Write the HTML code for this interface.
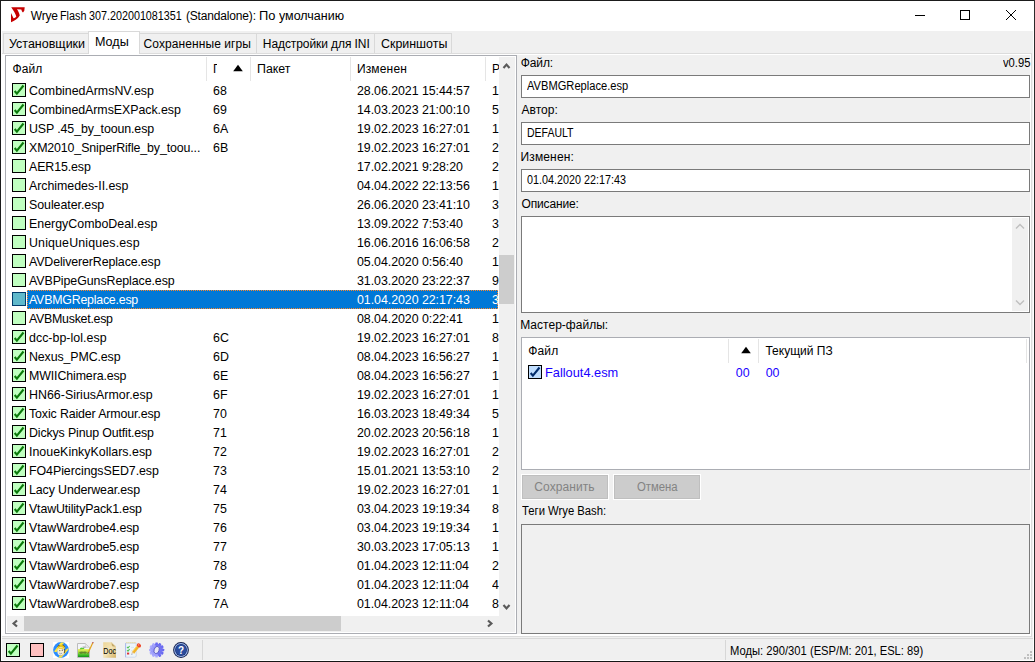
<!DOCTYPE html>
<html lang="ru"><head><meta charset="utf-8"><title>Wrye Flash</title>
<style>
*{box-sizing:border-box;margin:0;padding:0}
html,body{width:1035px;height:662px;overflow:hidden;background:#f0f0f0}
body{position:relative;font-family:"Liberation Sans",sans-serif;font-size:12px;color:#000;line-height:14px}
.a{position:absolute}
.t{position:absolute;white-space:pre;line-height:14px;height:14px;transform-origin:0 0}
#bt{left:0;top:0;width:1035px;height:1px;background:#1b1b1b}
#bl{left:0;top:0;width:1px;height:662px;background:#1b1b1b}
#br{left:1034px;top:0;width:1px;height:662px;background:#2b2b2b}
#bb{left:0;top:661px;width:1035px;height:1px;background:#161616}
#title{left:1px;top:1px;width:1033px;height:30px;background:#fff}
.tab{position:absolute;top:33px;height:21px;background:#f0f0f0;border:1px solid #d9d9d9;border-bottom:none}
.tab.sel{top:31px;height:23px;background:#fff}
#pageline{left:2px;top:53px;width:1030px;height:1px;background:#dcdcdc}
#page{left:1px;top:54px;width:1030px;height:582px;background:#fff}
#rp{left:517px;top:55px;width:513px;height:579px;background:#f0f0f0}
#list{left:5px;top:55px;width:512px;height:579px;border:1px solid #abadb3;background:#fff;overflow:hidden}
.hd{position:absolute;top:57px;height:24px;border-right:1px solid #e5e5e5}
.row{position:absolute;left:7px;width:491px;height:19px;font-size:12.4px;line-height:19px;white-space:pre}
.row span{position:absolute;top:1px;height:19px}
.row .c1{left:22px}
.row .c2{left:206px}
.row .c4{left:350px;letter-spacing:-0.05px}
.row .c5{left:485px;width:7px;overflow:hidden}
.row.sel::before{content:"";position:absolute;left:20px;top:0;right:0;height:19px;box-sizing:border-box;background:#0078d7;border:1px dotted #ff8728}
.row.sel span{color:#fff}
.cb{position:absolute;left:5px;top:2px;width:14px;height:14px;border:1px solid #000;background:#c0ffc0}
.cb svg{position:absolute;left:-1px;top:-1px;width:14px;height:14px}
.cb.selcb{background:#60b9cb;border-color:#003a6b}
.inp{position:absolute;left:521px;width:509px;height:23px;background:#fff;border:1px solid #7a7a7a}
.btn{position:absolute;top:475px;width:86px;height:24px;background:#ccc;border:1px solid #bfbfbf;box-shadow:0 0 0 1px #fff}
</style></head><body>
<div class="a" id="title"></div>
<svg class="a" style="left:10px;top:6px" width="16" height="18" viewBox="0 0 16 18"><path d="M1.2 1.2 L14.7 1.2 L14.3 4.8 L13 6.4 L12 5.6 L11.3 3.4 L7 3.3 C8.4 5.4 9.5 7.6 9.7 9.5 C8 12.6 4.6 14.8 1 16.2 L1 7.1 L3.5 12.2 C5 11.8 6 11.2 6.3 10.4 C5.4 7.6 3.6 4.4 1.2 1.2 Z" fill="#c60000"/></svg>
<svg class="a" style="left:905px;top:5px" width="125" height="22" viewBox="0 0 125 22" fill="none" stroke="#000" stroke-width="1"><path d="M10 10.5 H20"/><rect x="55.5" y="5.5" width="9" height="9"/><path d="M101 5 L111 15 M111 5 L101 15"/></svg>

<div class="tab" style="left:3px;width:86px"></div>
<div class="tab" style="left:139px;width:118px"></div>
<div class="tab" style="left:256px;width:119px"></div>
<div class="tab" style="left:374px;width:78px"></div>
<div class="a" id="pageline"></div>
<div class="a" id="page"></div><div class="a" id="rp"></div><div class="a" style="left:1031px;top:53px;width:1px;height:584px;background:#dcdcdc"></div>
<div class="tab sel" style="left:88px;width:52px"></div>

<div class="a" id="list"></div>
<div class="hd" style="left:7px;width:200px"></div>
<div class="hd" style="left:207px;width:44px"></div>
<div class="hd" style="left:251px;width:100px"></div>
<div class="hd" style="left:351px;width:135px"></div>
<div class="t" style="left:213px;top:62px;width:4px;overflow:hidden">Г</div>
<svg class="a" style="left:232.5px;top:64px" width="10" height="8" viewBox="0 0 10 8"><path d="M5 0.8 L9.8 7.2 H0.2 Z" fill="#000"/></svg>
<div class="t" style="left:492px;top:62px;width:7px;overflow:hidden">Р</div>
<div class="row" style="top:81px"><i class="cb on"><svg viewBox="0 0 14 14" width="14" height="14"><path d="M2.7 8 L4.9 10.7 L11.5 2.5" fill="none" stroke="#0a7a0a" stroke-width="2.1"/></svg></i><span class="c1">CombinedArmsNV.esp</span><span class="c2">68</span><span class="c4">28.06.2021 15:44:57</span><span class="c5">1</span></div>
<div class="row" style="top:100px"><i class="cb on"><svg viewBox="0 0 14 14" width="14" height="14"><path d="M2.7 8 L4.9 10.7 L11.5 2.5" fill="none" stroke="#0a7a0a" stroke-width="2.1"/></svg></i><span class="c1" style="letter-spacing:-0.05px">CombinedArmsEXPack.esp</span><span class="c2">69</span><span class="c4">14.03.2023 21:00:10</span><span class="c5">5</span></div>
<div class="row" style="top:119px"><i class="cb on"><svg viewBox="0 0 14 14" width="14" height="14"><path d="M2.7 8 L4.9 10.7 L11.5 2.5" fill="none" stroke="#0a7a0a" stroke-width="2.1"/></svg></i><span class="c1" style="letter-spacing:-0.11px">USP .45_by_tooun.esp</span><span class="c2">6A</span><span class="c4">19.02.2023 16:27:01</span><span class="c5">1</span></div>
<div class="row" style="top:138px"><i class="cb on"><svg viewBox="0 0 14 14" width="14" height="14"><path d="M2.7 8 L4.9 10.7 L11.5 2.5" fill="none" stroke="#0a7a0a" stroke-width="2.1"/></svg></i><span class="c1" style="letter-spacing:-0.13px">XM2010_SniperRifle_by_toou...</span><span class="c2">6B</span><span class="c4">19.02.2023 16:27:01</span><span class="c5">2</span></div>
<div class="row" style="top:157px"><i class="cb"></i><span class="c1" style="letter-spacing:-0.11px">AER15.esp</span><span class="c4">17.02.2021 9:28:20</span><span class="c5">2</span></div>
<div class="row" style="top:176px"><i class="cb"></i><span class="c1" style="letter-spacing:-0.03px">Archimedes-II.esp</span><span class="c4">04.04.2022 22:13:56</span><span class="c5">1</span></div>
<div class="row" style="top:195px"><i class="cb"></i><span class="c1" style="letter-spacing:-0.05px">Souleater.esp</span><span class="c4">26.06.2020 23:41:10</span><span class="c5">3</span></div>
<div class="row" style="top:214px"><i class="cb"></i><span class="c1" style="letter-spacing:0.01px">EnergyComboDeal.esp</span><span class="c4">13.09.2022 7:53:40</span><span class="c5">3</span></div>
<div class="row" style="top:233px"><i class="cb"></i><span class="c1" style="letter-spacing:0.15px">UniqueUniques.esp</span><span class="c4">16.06.2016 16:06:58</span><span class="c5">2</span></div>
<div class="row" style="top:252px"><i class="cb"></i><span class="c1" style="letter-spacing:-0.12px">AVDelivererReplace.esp</span><span class="c4">05.04.2020 0:56:40</span><span class="c5">1</span></div>
<div class="row" style="top:271px"><i class="cb"></i><span class="c1" style="letter-spacing:-0.07px">AVBPipeGunsReplace.esp</span><span class="c4">31.03.2020 23:22:37</span><span class="c5">9</span></div>
<div class="row sel" style="top:290px"><i class="cb selcb"></i><span class="c1" style="letter-spacing:-0.23px">AVBMGReplace.esp</span><span class="c4">01.04.2020 22:17:43</span><span class="c5">3</span></div>
<div class="row" style="top:309px"><i class="cb"></i><span class="c1" style="letter-spacing:-0.27px">AVBMusket.esp</span><span class="c4">08.04.2020 0:22:41</span><span class="c5">1</span></div>
<div class="row" style="top:328px"><i class="cb on"><svg viewBox="0 0 14 14" width="14" height="14"><path d="M2.7 8 L4.9 10.7 L11.5 2.5" fill="none" stroke="#0a7a0a" stroke-width="2.1"/></svg></i><span class="c1" style="letter-spacing:0.03px">dcc-bp-lol.esp</span><span class="c2">6C</span><span class="c4">19.02.2023 16:27:01</span><span class="c5">8</span></div>
<div class="row" style="top:347px"><i class="cb on"><svg viewBox="0 0 14 14" width="14" height="14"><path d="M2.7 8 L4.9 10.7 L11.5 2.5" fill="none" stroke="#0a7a0a" stroke-width="2.1"/></svg></i><span class="c1" style="letter-spacing:-0.12px">Nexus_PMC.esp</span><span class="c2">6D</span><span class="c4">08.04.2023 16:56:27</span><span class="c5">1</span></div>
<div class="row" style="top:366px"><i class="cb on"><svg viewBox="0 0 14 14" width="14" height="14"><path d="M2.7 8 L4.9 10.7 L11.5 2.5" fill="none" stroke="#0a7a0a" stroke-width="2.1"/></svg></i><span class="c1" style="letter-spacing:-0.12px">MWIIChimera.esp</span><span class="c2">6E</span><span class="c4">08.04.2023 16:56:27</span><span class="c5">1</span></div>
<div class="row" style="top:385px"><i class="cb on"><svg viewBox="0 0 14 14" width="14" height="14"><path d="M2.7 8 L4.9 10.7 L11.5 2.5" fill="none" stroke="#0a7a0a" stroke-width="2.1"/></svg></i><span class="c1" style="letter-spacing:0.02px">HN66-SiriusArmor.esp</span><span class="c2">6F</span><span class="c4">19.02.2023 16:27:01</span><span class="c5">1</span></div>
<div class="row" style="top:404px"><i class="cb on"><svg viewBox="0 0 14 14" width="14" height="14"><path d="M2.7 8 L4.9 10.7 L11.5 2.5" fill="none" stroke="#0a7a0a" stroke-width="2.1"/></svg></i><span class="c1" style="letter-spacing:-0.13px">Toxic Raider Armour.esp</span><span class="c2">70</span><span class="c4">16.03.2023 18:49:34</span><span class="c5">5</span></div>
<div class="row" style="top:423px"><i class="cb on"><svg viewBox="0 0 14 14" width="14" height="14"><path d="M2.7 8 L4.9 10.7 L11.5 2.5" fill="none" stroke="#0a7a0a" stroke-width="2.1"/></svg></i><span class="c1" style="letter-spacing:-0.14px">Dickys Pinup Outfit.esp</span><span class="c2">71</span><span class="c4">20.02.2023 20:56:18</span><span class="c5">1</span></div>
<div class="row" style="top:442px"><i class="cb on"><svg viewBox="0 0 14 14" width="14" height="14"><path d="M2.7 8 L4.9 10.7 L11.5 2.5" fill="none" stroke="#0a7a0a" stroke-width="2.1"/></svg></i><span class="c1" style="letter-spacing:0.02px">InoueKinkyKollars.esp</span><span class="c2">72</span><span class="c4">19.02.2023 16:27:01</span><span class="c5">2</span></div>
<div class="row" style="top:461px"><i class="cb on"><svg viewBox="0 0 14 14" width="14" height="14"><path d="M2.7 8 L4.9 10.7 L11.5 2.5" fill="none" stroke="#0a7a0a" stroke-width="2.1"/></svg></i><span class="c1" style="letter-spacing:-0.05px">FO4PiercingsSED7.esp</span><span class="c2">73</span><span class="c4">15.01.2021 13:53:10</span><span class="c5">2</span></div>
<div class="row" style="top:480px"><i class="cb on"><svg viewBox="0 0 14 14" width="14" height="14"><path d="M2.7 8 L4.9 10.7 L11.5 2.5" fill="none" stroke="#0a7a0a" stroke-width="2.1"/></svg></i><span class="c1" style="letter-spacing:-0.11px">Lacy Underwear.esp</span><span class="c2">74</span><span class="c4">19.02.2023 16:27:01</span><span class="c5">1</span></div>
<div class="row" style="top:499px"><i class="cb on"><svg viewBox="0 0 14 14" width="14" height="14"><path d="M2.7 8 L4.9 10.7 L11.5 2.5" fill="none" stroke="#0a7a0a" stroke-width="2.1"/></svg></i><span class="c1" style="letter-spacing:-0.15px">VtawUtilityPack1.esp</span><span class="c2">75</span><span class="c4">03.04.2023 19:19:34</span><span class="c5">8</span></div>
<div class="row" style="top:518px"><i class="cb on"><svg viewBox="0 0 14 14" width="14" height="14"><path d="M2.7 8 L4.9 10.7 L11.5 2.5" fill="none" stroke="#0a7a0a" stroke-width="2.1"/></svg></i><span class="c1" style="letter-spacing:-0.10px">VtawWardrobe4.esp</span><span class="c2">76</span><span class="c4">03.04.2023 19:19:34</span><span class="c5">1</span></div>
<div class="row" style="top:537px"><i class="cb on"><svg viewBox="0 0 14 14" width="14" height="14"><path d="M2.7 8 L4.9 10.7 L11.5 2.5" fill="none" stroke="#0a7a0a" stroke-width="2.1"/></svg></i><span class="c1" style="letter-spacing:-0.10px">VtawWardrobe5.esp</span><span class="c2">77</span><span class="c4">30.03.2023 17:05:13</span><span class="c5">1</span></div>
<div class="row" style="top:556px"><i class="cb on"><svg viewBox="0 0 14 14" width="14" height="14"><path d="M2.7 8 L4.9 10.7 L11.5 2.5" fill="none" stroke="#0a7a0a" stroke-width="2.1"/></svg></i><span class="c1" style="letter-spacing:-0.10px">VtawWardrobe6.esp</span><span class="c2">78</span><span class="c4">01.04.2023 12:11:04</span><span class="c5">2</span></div>
<div class="row" style="top:575px"><i class="cb on"><svg viewBox="0 0 14 14" width="14" height="14"><path d="M2.7 8 L4.9 10.7 L11.5 2.5" fill="none" stroke="#0a7a0a" stroke-width="2.1"/></svg></i><span class="c1" style="letter-spacing:-0.10px">VtawWardrobe7.esp</span><span class="c2">79</span><span class="c4">01.04.2023 12:11:04</span><span class="c5">4</span></div>
<div class="row" style="top:594px"><i class="cb on"><svg viewBox="0 0 14 14" width="14" height="14"><path d="M2.7 8 L4.9 10.7 L11.5 2.5" fill="none" stroke="#0a7a0a" stroke-width="2.1"/></svg></i><span class="c1" style="letter-spacing:-0.10px">VtawWardrobe8.esp</span><span class="c2">7A</span><span class="c4">01.04.2023 12:11:04</span><span class="c5">8</span></div>
<!-- vertical scrollbar -->
<div class="a" style="left:499px;top:57px;width:16px;height:575px;background:#f0f0f0"></div>
<div class="a" style="left:499px;top:255px;width:15px;height:49px;background:#cdcdcd"></div>
<svg class="a" style="left:498px;top:57px" width="17" height="17" viewBox="0 0 17 17"><path d="M5.5 11 L8.5 7.6 L11.5 11" fill="none" stroke="#5a5a5a" stroke-width="2.2"/></svg>
<svg class="a" style="left:498px;top:598px" width="17" height="17" viewBox="0 0 17 17"><path d="M5.5 7 L8.5 10.4 L11.5 7" fill="none" stroke="#5a5a5a" stroke-width="2.2"/></svg>
<!-- horizontal scrollbar -->
<div class="a" style="left:7px;top:616px;width:508px;height:16px;background:#f0f0f0"></div>
<div class="a" style="left:24px;top:616px;width:317px;height:15px;background:#cdcdcd"></div>
<svg class="a" style="left:7px;top:615px" width="17" height="17" viewBox="0 0 17 17"><path d="M10 5.5 L6.6 8.5 L10 11.5" fill="none" stroke="#5a5a5a" stroke-width="2.2"/></svg>
<svg class="a" style="left:482px;top:615px" width="17" height="17" viewBox="0 0 17 17"><path d="M6 5.5 L9.4 8.5 L6 11.5" fill="none" stroke="#5a5a5a" stroke-width="2.2"/></svg>

<!-- right panel -->
<div class="inp" style="top:75px"></div>
<div class="inp" style="top:122px"></div>
<div class="inp" style="top:169px"></div>
<div class="inp" style="top:216px;height:97px"></div>
<div class="a" style="left:1012px;top:218px;width:16px;height:93px;background:#f0f0f0"></div>
<svg class="a" style="left:1012px;top:218px" width="16" height="17" viewBox="0 0 16 17"><path d="M4 10.5 L8 6.5 L12 10.5" fill="none" stroke="#bfbfbf" stroke-width="1.4"/></svg>
<svg class="a" style="left:1012px;top:294px" width="16" height="17" viewBox="0 0 16 17"><path d="M4 6.5 L8 10.5 L12 6.5" fill="none" stroke="#bfbfbf" stroke-width="1.4"/></svg>
<div class="inp" style="top:337px;height:133px;border-color:#abadb3"></div>
<div class="a" style="left:728px;top:339px;width:1px;height:24px;background:#e5e5e5"></div>
<div class="a" style="left:758px;top:339px;width:1px;height:24px;background:#e5e5e5"></div>
<div class="a" style="left:1026px;top:339px;width:1px;height:24px;background:#e5e5e5"></div>
<svg class="a" style="left:740.5px;top:346px" width="10" height="8" viewBox="0 0 10 8"><path d="M5 0.8 L9.8 7.2 H0.2 Z" fill="#000"/></svg>
<i class="cb" style="left:528px;top:365px;background:#c0deff"><svg viewBox="0 0 14 14" width="14" height="14"><path d="M2.7 8 L4.9 10.7 L11.5 2.5" fill="none" stroke="#002c6c" stroke-width="2.1"/></svg></i>
<div class="btn" style="left:522px"></div>
<div class="btn" style="left:614px"></div>
<div class="inp" style="top:524px;height:110px;background:#f0f0f0"></div>

<!-- status bar -->
<div class="a" style="left:2px;top:636px;width:1030px;height:1px;background:#dcdcdc"></div><div class="a" style="left:1px;top:638px;width:1033px;height:1px;background:#d8d8d8"></div>
<div class="a" style="left:202px;top:640px;width:1px;height:20px;background:#d7d7d7"></div>
<div class="a" style="left:725px;top:640px;width:1px;height:20px;background:#d7d7d7"></div>
<i class="cb" style="left:6px;top:643px"><svg viewBox="0 0 14 14" width="14" height="14"><path d="M2.7 8 L4.9 10.7 L11.5 2.5" fill="none" stroke="#0a7a0a" stroke-width="2.1"/></svg></i>
<i class="cb" style="left:30px;top:643px;background:#ffc0c0"></i>
<svg class="a" style="left:1024px;top:651px" width="8" height="8" viewBox="0 0 8 8" fill="#bfbfbf"><rect x="6" y="0" width="2" height="2"/><rect x="3" y="3" width="2" height="2"/><rect x="6" y="3" width="2" height="2"/><rect x="0" y="6" width="2" height="2"/><rect x="3" y="6" width="2" height="2"/><rect x="6" y="6" width="2" height="2"/></svg>
<!-- status bar icons -->
<svg class="a" style="left:53px;top:642px" width="16" height="16" viewBox="0 0 16 16"><rect width="16" height="16" fill="#fff"/><circle cx="8" cy="8" r="7.9" fill="#2a8cff"/><path d="M8 0.2 L11.2 0.8 L6.4 6.6 L3.4 10.2 L1 9.4 Z M15.3 6 L15.5 7.6 L8.4 15.8 L5.2 15.4 L10.4 9.4 Z" fill="#ffe640"/><path d="M4.5 6.4 Q4.4 3.6 6.6 3.2 Q8 1.8 9.6 2.8 Q12 3.2 11.9 6 L11.3 7.6 Q8.4 5 4.8 7.2 Z" fill="#e9c41c"/><path d="M4.7 4.6 L5.5 3.3 L6.8 3.9 M9.4 2.9 Q11 3 11.6 4.8" stroke="#4a3c10" stroke-width="0.7" fill="none"/><ellipse cx="7.9" cy="9.4" rx="3.5" ry="4.1" fill="#f8efd8"/><path d="M4.6 7.2 Q8 4.8 11.2 7.2 Q8 6.2 4.6 7.2 Z" fill="#e9c41c"/><path d="M11.2 7.2 Q12.7 8.6 11.1 11.2" stroke="#3e3220" stroke-width="0.9" fill="none"/><circle cx="6.8" cy="8.6" r="0.65" fill="#6a6058"/><circle cx="9.3" cy="8.2" r="0.65" fill="#5a5048"/><path d="M6.2 11.2 Q7.6 12.4 9 11.2" stroke="#88a0b4" stroke-width="0.9" fill="none"/><path d="M6 13.4 Q8 14.4 10 12.8" stroke="#bfae88" stroke-width="0.7" fill="none"/></svg>
<svg class="a" style="left:77px;top:642px" width="17" height="16" viewBox="0 0 17 16"><defs><linearGradient id="lg1" x1="0" y1="0" x2="0" y2="1"><stop offset="0" stop-color="#f4f06a"/><stop offset="0.35" stop-color="#b4de3c"/><stop offset="0.7" stop-color="#4cc02c"/><stop offset="1" stop-color="#109418"/></linearGradient></defs><path d="M0.5 1.5 H8.4 L12.5 5.4 V15.5 H0.5 Z" fill="#f3f5f8" stroke="#bcbcbc"/><path d="M8.4 1.5 V5.4 H12.5" fill="#e6e6e6" stroke="#c8c8c8" stroke-width="0.6"/><rect x="1" y="7" width="11" height="8" fill="url(#lg1)"/><path d="M2.6 7.4 Q3.6 4.6 5.4 6 Q6.6 4.8 7.4 7 Z" fill="#58cc34"/><path d="M5.6 4.4 H8.6 V6 H5.6 Z" fill="#b4b8bc"/><path d="M2 10.2 Q4.6 8.8 6.2 9.8 Q8.4 8.8 10 10.2 L8.4 11.8 Q6 10.8 3.8 12 Z" fill="#56742a" opacity="0.8"/><path d="M15.9 0.6 L11.3 10.4" stroke="#e2a21c" stroke-width="1.2"/><path d="M16.2 0 L15.6 1.3" stroke="#b4526a" stroke-width="1.2"/><path d="M11.4 10.2 L10.8 11.6" stroke="#6a5030" stroke-width="1"/></svg>
<svg class="a" style="left:103px;top:642px" width="14" height="16" viewBox="0 0 14 16"><defs><linearGradient id="lg2" x1="0" y1="0" x2="1" y2="1"><stop offset="0" stop-color="#ecd598"/><stop offset="0.5" stop-color="#f4e4b6"/><stop offset="1" stop-color="#d4b264"/></linearGradient></defs><path d="M0.2 0.3 H8.6 L13 4.4 V15.8 H0.2 Z" fill="url(#lg2)"/><path d="M8.6 0.3 L13 4.4 H9.8 Q8.4 4.2 8.6 0.3 Z" fill="#c4a868"/><path d="M8.8 0.5 L12.8 4.2" stroke="#f8f2e2" stroke-width="0.8"/><text x="0.2" y="12" font-family="Liberation Sans, sans-serif" font-size="9.4" textLength="12.8" lengthAdjust="spacingAndGlyphs" fill="#000">Doc</text></svg>
<svg class="a" style="left:125px;top:642px" width="17" height="16" viewBox="0 0 17 16"><path d="M0.6 1.2 H11.2 V14.4 L9.8 15.2 H0.6 Z" fill="#edf5fb" stroke="#c6d2e8" stroke-width="0.8"/><path d="M0.6 1.2 V15.2" stroke="#a9b9ea" stroke-width="1"/><path d="M1.4 0.7 H10.8" stroke="#e6d68c" stroke-width="1.2" stroke-dasharray="1 1"/><path d="M2 5 L3 6 L4.6 4 M2 8.2 L3 9.2 L4.6 7.2" stroke="#58c458" stroke-width="1.1" fill="none"/><rect x="2" y="10.6" width="2.2" height="1.9" fill="#de3434"/><path d="M6 5.4 H9 M6 8.6 H7.4" stroke="#d4e0ee" stroke-width="0.8"/><path d="M13 4.6 L8 10.8" stroke="#f2b42a" stroke-width="2.9"/><path d="M12 3.9 L7.2 9.9" stroke="#fbdc72" stroke-width="0.9"/><ellipse cx="13.9" cy="3.4" rx="2.3" ry="1.8" transform="rotate(40 13.9 3.4)" fill="#ee4424"/><circle cx="13.6" cy="2.9" r="0.8" fill="#ff8468"/><path d="M9 10 L6.4 12.6 L7 9.6 Z" fill="#e6c698"/><path d="M7 11.6 L6.3 12.7 L7.5 12.2 Z" fill="#46568e"/></svg>
<svg class="a" style="left:149px;top:642px" width="16" height="16" viewBox="0 0 16 16"><defs><linearGradient id="lg3" gradientUnits="userSpaceOnUse" x1="-3" y1="-7.5" x2="3" y2="7.5"><stop offset="0" stop-color="#6262ee"/><stop offset="0.55" stop-color="#8686f8"/><stop offset="1" stop-color="#b8b8ff"/></linearGradient></defs><g transform="translate(7.6 8)" fill="url(#lg3)"><circle r="6.3"/><rect x="-1.3" y="-7.6" width="2.6" height="15.2" rx="0.6" transform="rotate(0.0)"/><rect x="-1.3" y="-7.6" width="2.6" height="15.2" rx="0.6" transform="rotate(30.0)"/><rect x="-1.3" y="-7.6" width="2.6" height="15.2" rx="0.6" transform="rotate(60.0)"/><rect x="-1.3" y="-7.6" width="2.6" height="15.2" rx="0.6" transform="rotate(90.0)"/><rect x="-1.3" y="-7.6" width="2.6" height="15.2" rx="0.6" transform="rotate(120.0)"/><rect x="-1.3" y="-7.6" width="2.6" height="15.2" rx="0.6" transform="rotate(150.0)"/><ellipse rx="2.5" ry="3.7" transform="rotate(20)" fill="#e8e8f4" stroke="#5252c2" stroke-width="0.8"/></g></svg>
<svg class="a" style="left:173px;top:642px" width="16" height="16" viewBox="0 0 16 16"><circle cx="8" cy="8" r="7.9" fill="#141f4a"/><circle cx="8" cy="8" r="6.9" fill="#9ab8f0"/><circle cx="8" cy="8" r="5.9" fill="#1a2c66"/><circle cx="8" cy="8" r="5.4" fill="#2a4c9e"/><text x="8" y="11.8" text-anchor="middle" font-family="Liberation Sans, sans-serif" font-weight="bold" font-size="10" fill="#fff">?</text></svg>

<div class="a" style="left:0;top:0;white-space:normal"><span class="t" style="left:30.8px;top:9px;letter-spacing:-0.23px">Wrye</span> <span class="t" style="left:59.9px;top:9px;transform:scaleX(0.900)">Flash</span> <span class="t" style="left:89.4px;top:9px;transform:scaleX(0.897)">307.202001081351</span> <span class="t" style="left:185.9px;top:9px;letter-spacing:-0.16px">(Standalone):</span> <span class="t" style="left:258.7px;top:9px;transform:scaleX(1.071)">По</span> <span class="t" style="left:278.8px;top:9px;transform:scaleX(1.040)">умолчанию</span></div>
<div class="t" style="left:8.5px;top:37px;transform:scaleX(1.041)">Установщики</div>
<div class="t" style="left:95.2px;top:35px;transform:scaleX(1.048)">Моды</div>
<div class="t" style="left:143.5px;top:37px;letter-spacing:0.09px">Сохраненные игры</div>
<div class="t" style="left:262.8px;top:37px;letter-spacing:-0.08px">Надстройки для INI</div>
<div class="t" style="left:381.2px;top:37px;transform:scaleX(1.035)">Скриншоты</div>
<div class="t" style="left:12.6px;top:62px;letter-spacing:0.07px">Файл</div>
<div class="t" style="left:257.2px;top:62px;transform:scaleX(1.032)">Пакет</div>
<div class="t" style="left:356.9px;top:62px;letter-spacing:0.17px">Изменен</div>
<div class="t" style="left:520.8px;top:56px;letter-spacing:-0.12px">Файл:</div>
<div class="t" style="left:1002.9px;top:56px;transform:scaleX(0.934)">v0.95</div>
<div class="t" style="left:527.0px;top:79px;transform:scaleX(0.927)">AVBMGReplace.esp</div>
<div class="t" style="left:521.5px;top:103px;letter-spacing:0.02px">Автор:</div>
<div class="t" style="left:526.9px;top:126px;transform:scaleX(0.875)">DEFAULT</div>
<div class="t" style="left:520.5px;top:150px;letter-spacing:0.14px">Изменен:</div>
<div class="t" style="left:527.2px;top:173px;transform:scaleX(0.898)">01.04.2020 22:17:43</div>
<div class="t" style="left:521.5px;top:197px;letter-spacing:-0.14px">Описание:</div>
<div class="t" style="left:520.2px;top:318px;letter-spacing:0.02px">Мастер-файлы:</div>
<div class="t" style="left:528.2px;top:344px;letter-spacing:0.17px">Файл</div>
<div class="t" style="left:765.4px;top:344px;letter-spacing:0.01px">Текущий ПЗ</div>
<div class="t" style="left:544.6px;top:366px;transform:scaleX(1.033);font-size:12.4px;color:#1a00ff">Fallout4.esm</div>
<div class="t" style="left:735.8px;top:366px;font-size:12.4px;color:#1a00ff">00</div>
<div class="t" style="left:765.7px;top:366px;font-size:12.4px;color:#1a00ff">00</div>
<div class="t" style="left:534.3px;top:480px;letter-spacing:0.08px;color:#838383">Сохранить</div>
<div class="t" style="left:636.8px;top:480px;transform:scaleX(0.944);color:#838383">Отмена</div>
<div class="t" style="left:521.8px;top:504px;transform:scaleX(0.940)">Теги Wrye Bash:</div>
<div class="t" style="left:729.7px;top:644px;transform:scaleX(0.934)">Моды: 290/301 (ESP/M: 201, ESL: 89)</div>
<div class="a" style="left:1px;top:31px;width:1px;height:630px;background:#fff"></div><div class="a" style="left:1033px;top:31px;width:1px;height:630px;background:#fff"></div><div class="a" style="left:1px;top:660px;width:1033px;height:1px;background:#fff"></div>
<div class="a" id="bt"></div><div class="a" id="bl"></div><div class="a" id="br"></div><div class="a" id="bb"></div>
</body></html>
